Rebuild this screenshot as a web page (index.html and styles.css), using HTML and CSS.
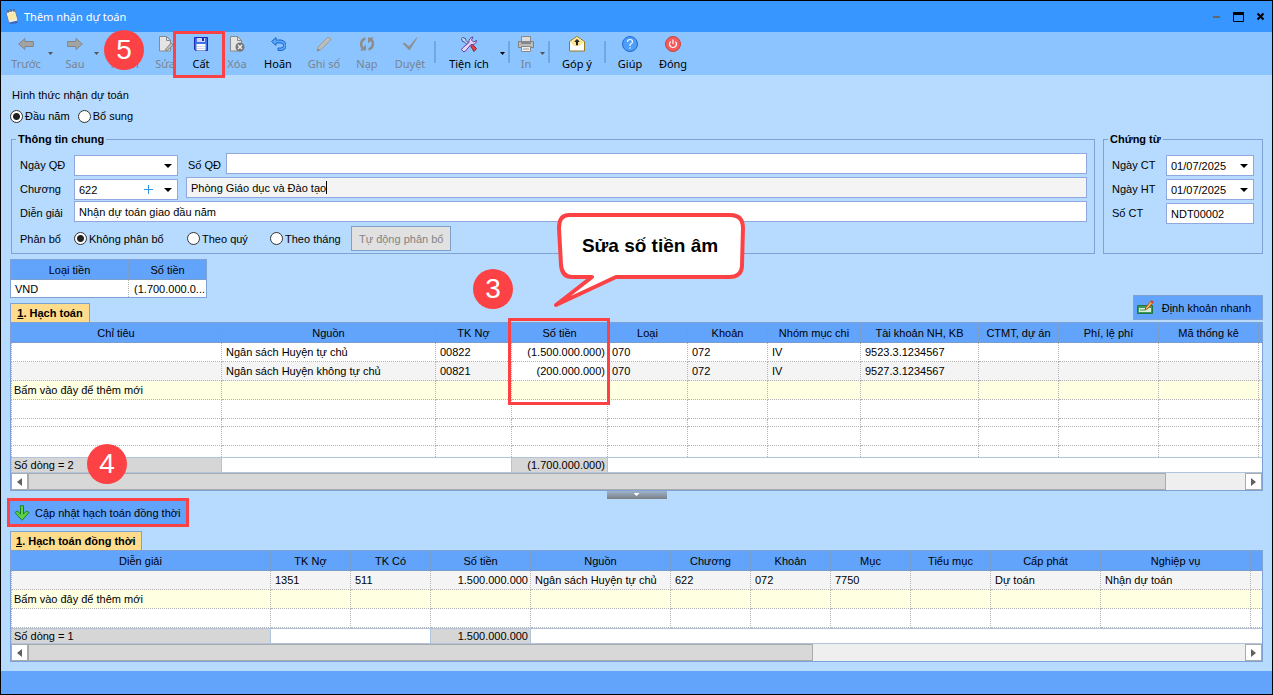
FILE: index.html
```html
<!DOCTYPE html>
<html lang="vi">
<head>
    <meta charset="UTF-8">
    <meta name="viewport" content="width=device-width, initial-scale=1.0">
    <title>Thêm nhận dự toán</title>
    <link rel="stylesheet" href="styles.css">
</head>
<body>

<div class="window">
    <header class="titlebar">
        <svg class="app-icon" width="14" height="16" viewBox="0 0 14 16">
            <path d="M1 3l9-2 3 11-9 2z" fill="#e9eefb" stroke="#5b7fc4"/>
            <path d="M2 5l8-2 2 7-8 2z" fill="#fbe9a8"/>
            <path d="M4 14l8-2 1 2-7 1z" fill="#4065b5"/>
            <path d="M3 1v3M6 0v3M9 0v3" stroke="#555"/>
        </svg>
        <h1>Thêm nhận dự toán</h1>
        <div class="window-buttons">
            <button aria-label="Thu nhỏ"><svg width="12" height="12"><path d="M2 6h7" stroke="#666" stroke-width="2"/></svg></button>
            <button aria-label="Phóng to"><svg width="12" height="12"><path d="M.5 1v9.500h10V1" fill="none" stroke="#000"/><path d="M0 2.500h11" stroke="#000" stroke-width="3"/></svg></button>
            <button aria-label="Đóng cửa sổ"><svg width="12" height="12"><path d="M2.500 2.500l6 6M8.500 2.500l-6 6" stroke="#000" stroke-width="2"/></svg></button>
        </div>
    </header>

    <nav class="toolbar">
        <button class="tool tool-lg" disabled>
            <svg width="16" height="16"><path d="M.7 8L7 2.500v3h8.300v5H7v3z" fill="#a3a3a3" stroke="#858585"/></svg>
            Trước
        </button>
        <span class="drop off"></span>
        <button class="tool tool-md" disabled>
            <svg width="16" height="16"><path d="M15.300 8L9 2.500v3H.7v5H9v3z" fill="#a3a3a3" stroke="#858585"/></svg>
            Sau
        </button>
        <span class="drop off"></span>
        <button class="tool tool-lg" disabled>
            <svg width="16" height="16"><path d="M3.500.5h6l3 3v12h-9z" fill="#ddd" stroke="#888"/></svg>
            Thêm
        </button>
        <button class="tool tool-sm" disabled>
            <svg width="16" height="16"><path d="M2.500.5h7l4 4v10.500h-11z" fill="#e4e4e4" stroke="#8a8a8a"/><path d="M9.500.5v4h4" fill="none" stroke="#8a8a8a"/><path d="M8 14l6-7 2 2-6 6z" fill="#bbb" stroke="#888"/></svg>
            Sửa
        </button>
        <button class="tool tool-sm">
            <svg width="16" height="16"><path d="M1.500 1.500h13v13h-12l-1-1z" fill="#3d6fe6" stroke="#1c2bb0"/><path d="M4 2h8v4H4z" fill="#c9d6f5"/><path d="M9 2h2v3H9z" fill="#1c2bb0"/><path d="M3.500 8h9v6.500h-9z" fill="#fff"/><path d="M4 10.500h8M4 12.500h8" stroke="#cfd9ee"/></svg>
            Cất
        </button>
        <button class="tool tool-sm" disabled>
            <svg width="16" height="16"><path d="M1.500.5h7l4 4v10.500h-11z" fill="#e4e4e4" stroke="#8a8a8a"/><path d="M8.500.5v4h4" fill="none" stroke="#8a8a8a"/><circle cx="11" cy="11" r="4.500" fill="#777"/><path d="M9 9l4 4M13 9l-4 4" stroke="#eee" stroke-width="1.500"/></svg>
            Xóa
        </button>
        <button class="tool tool-lg">
            <svg width="16" height="16"><path d="M6 1.500L1.500 5.500 6 9.500V7h5q2.500 0 2.500 2.500T10.500 12H8v2.500h3q5-.5 5-5T11 4H6z" fill="#58a6f5" stroke="#1e66cf"/></svg>
            Hoãn
        </button>
        <button class="tool tool-lg" disabled>
            <svg width="16" height="16"><path d="M1 15l1-4L12 1l3 2.500L5 13.500z" fill="#bdbdbd" stroke="#9a9a9a"/><path d="M1 15l1.500-2 1 1z" fill="#666"/></svg>
            Ghi sổ
        </button>
        <button class="tool tool-md" disabled>
            <svg width="16" height="16"><path d="M6.500 2.500C1.500 4 1 9.500 4 12.500M9.500 13.500c5-1.500 5.500-7 2.500-10" fill="none" stroke="#8d8d8d" stroke-width="2.500"/><path d="M1 14.500h6v-6zM15 1.500H9v6z" fill="#8d8d8d"/></svg>
            Nạp
        </button>
        <button class="tool tool-lg" disabled>
            <svg width="16" height="16"><path d="M.5 7.500l2-1L7 10.500 14.500 1.500h1L7.500 14.500z" fill="#8f8f8f"/></svg>
            Duyệt
        </button>
        <span class="separator"></span>
        <button class="tool tool-xl">
            <svg width="18" height="16" viewBox="0 0 17 16"><path d="M2 1.500l3 1 .5 2 4 4-1.500 1.500-4-4-2-.5-1-3z" fill="#c6dcf5" stroke="#3c4da0"/><path d="M9.500 9l1.500-1.500 5 5-2.500 3z" fill="#e0444b" stroke="#8c2634"/><path d="M2 15q-2-1.500 0-3L8.500 6.500Q8 2 12.500 1L11 4l2 2 3-1.500Q15.500 9 10.500 8.500L5 15q-1.500 1.500-3 0z" fill="#e6d6f6" stroke="#6141a0"/></svg>
            Tiện ích
        </button>
        <span class="drop"></span>
        <span class="separator"></span>
        <button class="tool tool-xs" disabled>
            <svg width="16" height="16"><path d="M3.500.5h9v5h-9z" fill="#ddd" stroke="#888"/><path d="M.5 5.500h15v6H.5z" fill="#bbb" stroke="#808080"/><path d="M3 5h10v3H3z" fill="#888"/><path d="M3.500 10.500h9v5h-9z" fill="#eee" stroke="#888"/><path d="M5 13h6" stroke="#999"/></svg>
            In
        </button>
        <span class="drop off"></span>
        <span class="separator"></span>
        <button class="tool tool-wide">
            <svg width="16" height="16"><path d="M.5 5.500L8 .5l7.500 5v9.500H.5z" fill="#fff" stroke="#9a7a1a"/><path d="M1 6l7-5 7 5-4.500 4h-5z" fill="#fce691"/><path d="M7.500 9V5h1v4zM6 5.500l2-2 2 2z" stroke="#222" fill="#222"/></svg>
            Góp ý
        </button>
        <span class="separator"></span>
        <button class="tool tool-lg">
            <svg width="16" height="16" fill="none"><circle cx="8" cy="8" r="7.500" fill="#4d9dfa" stroke="#2268cf"/><path d="M5.500 6Q5.500 3.500 8 3.500T10.500 6Q10.500 7.200 8 8.500v1.500M8 11.200v1.600" stroke="#fff" stroke-width="1.200"/></svg>
            Giúp
        </button>
        <button class="tool tool-md">
            <svg width="16" height="16" fill="none"><circle cx="8" cy="8" r="7.500" fill="#f25c5c" stroke="#cd4141"/><path d="M5.500 5.500q-2 2.500 0 5 2.500 2 5 0 2-2.500 0-5M8 3.500V8" stroke="#fff" stroke-width="1.200"/></svg>
            Đóng
        </button>
    </nav>

    <main class="content">
        <div class="kind" role="radiogroup" aria-labelledby="kindLabel">
            <p id="kindLabel">Hình thức nhận dự toán</p>
            <div class="radios">
                <label class="radio"><input type="radio" name="kind" checked>Đầu năm</label>
                <label class="radio"><input type="radio" name="kind">Bổ sung</label>
            </div>
        </div>

        <div class="groups">
            <fieldset class="group group-main">
                <legend>Thông tin chung</legend>
                <div class="row">
                    <label class="caption" for="decisionDate">Ngày QĐ</label>
                    <span class="combo combo-wide"><select id="decisionDate"><option></option></select></span>
                    <label class="caption caption-mid" for="decisionNo">Số QĐ</label>
                    <input class="field" id="decisionNo" type="text">
                </div>
                <div class="row">
                    <label class="caption" for="chapter">Chương</label>
                    <span class="combo combo-wide">
                        <select id="chapter"><option>622</option></select>
                        <button class="plus" aria-label="Thêm chương"><svg width="9" height="9"><path d="M0 4.500h9M4.500 0v9" stroke="#2e97e6"/></svg></button>
                    </span>
                    <span class="field field-readonly">
                        <input type="text" value="Phòng Giáo dục và Đào tạo" aria-label="Tên chương" readonly><i class="caret"></i>
                    </span>
                </div>
                <div class="row">
                    <label class="caption" for="description">Diễn giải</label>
                    <input class="field" id="description" type="text" value="Nhận dự toán giao đầu năm">
                </div>
                <div class="row row-split" role="radiogroup" aria-labelledby="splitLabel">
                    <span class="caption" id="splitLabel">Phân bổ</span>
                    <label class="radio radio-none"><input type="radio" name="split" checked>Không phân bổ</label>
                    <label class="radio radio-part"><input type="radio" name="split">Theo quý</label>
                    <label class="radio radio-month"><input type="radio" name="split">Theo tháng</label>
                    <button class="auto-split" disabled>Tự động phân bổ</button>
                </div>
            </fieldset>

            <fieldset class="group group-voucher">
                <legend>Chứng từ</legend>
                <div class="row">
                    <label class="caption" for="voucherDate">Ngày CT</label>
                    <span class="combo"><select id="voucherDate"><option>01/07/2025</option></select></span>
                </div>
                <div class="row">
                    <label class="caption" for="postDate">Ngày HT</label>
                    <span class="combo"><select id="postDate"><option>01/07/2025</option></select></span>
                </div>
                <div class="row">
                    <label class="caption" for="voucherNo">Số CT</label>
                    <input class="field" id="voucherNo" type="text" value="NDT00002">
                </div>
            </fieldset>
        </div>

        <div class="currency">
            <table>
                <colgroup><col class="w118"><col></colgroup>
                <thead><tr><th>Loại tiền</th><th>Số tiền</th></tr></thead>
                <tbody><tr><td>VND</td><td class="num">(1.700.000.0...</td></tr></tbody>
            </table>
        </div>

        <div class="tabs">
            <button class="tab"><u>1</u>. Hạch toán</button>
            <button class="action quick">
                <svg width="17" height="16"><path d="M.5 5.500h15v8H.5z" fill="#3a9a5e" stroke="#1f7543"/><path d="M2 8h12v4H2z" fill="#d5efd4"/><path d="M3 10h5" stroke="#3a9a5e"/><path d="M8 10l1-3 5-6 2 1.500-5 6z" fill="#f5b65a" stroke="#a85427"/><path d="M14 1l2 1.500" stroke="#d33" stroke-width="2"/></svg>
                Định khoản nhanh
            </button>
        </div>

        <div class="grid">
            <table>
                <colgroup>
                    <col class="w211"><col class="w214"><col class="w76"><col class="w96"><col class="w80"><col class="w80"><col class="w93"><col class="w118"><col class="w80"><col class="w100"><col class="w100"><col>
                </colgroup>
                <thead>
                    <tr><th>Chỉ tiêu</th><th>Nguồn</th><th>TK Nợ</th><th>Số tiền</th><th>Loại</th><th>Khoản</th><th>Nhóm mục chi</th><th>Tài khoản NH, KB</th><th>CTMT, dự án</th><th>Phí, lệ phí</th><th>Mã thống kê</th><th></th></tr>
                </thead>
                <tbody>
                    <tr><td></td><td>Ngân sách Huyện tự chủ</td><td>00822</td><td class="num">(1.500.000.000)</td><td>070</td><td>072</td><td>IV</td><td>9523.3.1234567</td><td></td><td></td><td></td><td></td></tr>
                    <tr class="alt"><td></td><td>Ngân sách Huyện không tự chủ</td><td>00821</td><td class="num edited">(200.000.000)</td><td>070</td><td>072</td><td>IV</td><td>9527.3.1234567</td><td></td><td></td><td></td><td></td></tr>
                    <tr class="new"><td>Bấm vào đây để thêm mới</td><td></td><td></td><td></td><td></td><td></td><td></td><td></td><td></td><td></td><td></td><td></td></tr>
                    <tr><td></td><td></td><td></td><td></td><td></td><td></td><td></td><td></td><td></td><td></td><td></td><td></td></tr>
                    <tr class="thin"><td></td><td></td><td></td><td></td><td></td><td></td><td></td><td></td><td></td><td></td><td></td><td></td></tr>
                    <tr><td></td><td></td><td></td><td></td><td></td><td></td><td></td><td></td><td></td><td></td><td></td><td></td></tr>
                    <tr class="cut"><td></td><td></td><td></td><td></td><td></td><td></td><td></td><td></td><td></td><td></td><td></td><td></td></tr>
                </tbody>
                <tfoot>
                    <tr><td class="sum">Số dòng = 2</td><td colspan="2" class="before-sum"></td><td class="sum num">(1.700.000.000)</td><td colspan="8"></td></tr>
                </tfoot>
            </table>
            <div class="scrollbar">
                <button aria-label="Cuộn trái"><svg width="5" height="8"><path d="M5 0v8L0 4z"/></svg></button>
                <div class="track"><div class="thumb thumb-long"></div></div>
                <button aria-label="Cuộn phải"><svg width="5" height="8"><path d="M0 0v8l5-4z"/></svg></button>
            </div>
        </div>

        <div class="splitter"><button aria-label="Thu gọn"></button></div>

        <button class="action update">
            <svg width="16" height="16"><path d="M6.500.7h3v8.500l3-3.200 2.500 1.500-7 7.800L1 7.500 3.500 6l3 3.200z" fill="#5fd047" stroke="#17861d"/></svg>
            Cập nhật hạch toán đồng thời
        </button>

        <div class="tabs tabs-second">
            <button class="tab"><u>1</u>. Hạch toán đồng thời</button>
        </div>

        <div class="grid">
            <table>
                <colgroup>
                    <col class="w260"><col class="w80"><col class="w80"><col class="w100"><col class="w140"><col class="w80"><col class="w80"><col class="w80"><col class="w80"><col class="w110"><col class="w150"><col>
                </colgroup>
                <thead>
                    <tr><th>Diễn giải</th><th>TK Nợ</th><th>TK Có</th><th>Số tiền</th><th>Nguồn</th><th>Chương</th><th>Khoản</th><th>Mục</th><th>Tiểu mục</th><th>Cấp phát</th><th>Nghiệp vụ</th><th></th></tr>
                </thead>
                <tbody>
                    <tr class="alt"><td></td><td>1351</td><td>511</td><td class="num">1.500.000.000</td><td>Ngân sách Huyện tự chủ</td><td>622</td><td>072</td><td>7750</td><td></td><td>Dự toán</td><td>Nhận dự toán</td><td></td></tr>
                    <tr class="new"><td>Bấm vào đây để thêm mới</td><td></td><td></td><td></td><td></td><td></td><td></td><td></td><td></td><td></td><td></td><td></td></tr>
                    <tr><td></td><td></td><td></td><td></td><td></td><td></td><td></td><td></td><td></td><td></td><td></td><td></td></tr>
                </tbody>
                <tfoot>
                    <tr><td class="sum">Số dòng = 1</td><td colspan="2" class="before-sum"></td><td class="sum num">1.500.000.000</td><td colspan="8"></td></tr>
                </tfoot>
            </table>
            <div class="scrollbar">
                <button aria-label="Cuộn trái"><svg width="5" height="8"><path d="M5 0v8L0 4z"/></svg></button>
                <div class="track"><div class="thumb thumb-short"></div></div>
                <button aria-label="Cuộn phải"><svg width="5" height="8"><path d="M0 0v8l5-4z"/></svg></button>
            </div>
        </div>
    </main>

    <footer class="statusbar"></footer>

    <!-- Guide marks over the form -->
    <div class="mark mark-save"></div>
    <div class="mark mark-amount"></div>
    <div class="mark mark-update"></div>
    <span class="step step-3">3</span>
    <span class="step step-4">4</span>
    <span class="step step-5">5</span>
    <div class="callout">
        <svg width="196" height="98"><path d="M17 4L178 4Q191 4 191 17L190 54Q190 66 177 66L64 66 4 94 40 66 20 66Q10 66 9 54L7 17Q7 4 17 4z" fill="#fff" stroke="#fd4245" stroke-width="4" stroke-linejoin="round"/></svg>
        <p>Sửa số tiền âm</p>
    </div>
</div>

</body>
</html>
```
FILE: styles.css
```css
* {
    box-sizing: border-box;
}
body {
    margin: 0;
    background: #b6dbff;
    color: #000;
    font: 11px/14px "Liberation Sans", Arial, sans-serif;
}
button, input, select {
    font: inherit;
    color: inherit;
    margin: 0;
    padding: 0;
    border: 0;
    border-radius: 0;
    outline: 0;
}
button {
    background: none;
}
h1, p {
    margin: 0;
}
svg {
    display: block;
    flex: none;
}
.window {
    position: relative;
    display: flex;
    flex-direction: column;
    min-height: 100vh;
    border: 1px solid #000;
    background: #b6dbff;
}

/* Title bar and toolbar */
.titlebar {
    display: flex;
    align-items: center;
    gap: 5px;
    height: 31px;
    padding: 0 5px 0 4px;
    background: #3796ff;
}
.titlebar h1 {
    flex: 1;
    color: #fff;
    font: 11px/16px "Noto Sans", sans-serif;
}
.window-buttons {
    display: flex;
    gap: 10px;
}
.toolbar {
    display: flex;
    height: 43px;
    padding-left: 2px;
    background: #8bc4ff;
}
.tool {
    display: flex;
    flex-direction: column;
    align-items: center;
    gap: 4px;
    padding-top: 4px;
    font: 11px/16px "Noto Sans", sans-serif;
    white-space: nowrap;
}
.tool:disabled {
    color: #7a838e;
}
.tool-xs { width: 30px; }
.tool-sm { width: 36px; }
.tool-md { width: 40px; }
.tool-lg { width: 46px; }
.tool-wide { width: 52px; }
.tool-xl { width: 64px; }
.drop {
    width: 5px;
    height: 3px;
    margin: 20px 2px 0 -1px;
    background: #000;
    clip-path: polygon(0 0, 100% 0, 50% 100%);
}
.drop.off {
    background: #555;
}
.separator {
    width: 2px;
    height: 22px;
    margin: 9px 1px 0;
    background: #70a8e6;
}

/* Form */
.content {
    flex: 1;
    padding: 12px 9px 9px;
}
.kind p {
    padding-left: 2px;
    line-height: 16px;
}
.radios {
    display: flex;
    gap: 8px;
    margin-top: 6px;
}
.radio {
    display: flex;
    align-items: center;
    gap: 2px;
    white-space: nowrap;
}
.radio input {
    appearance: none;
    width: 13px;
    height: 13px;
    border: 1px solid #333;
    border-radius: 50%;
    background: #fff;
}
.radio input:checked {
    background: radial-gradient(circle, #222 3px, #fff 4px);
}
.groups {
    display: flex;
    gap: 8px;
    margin-top: 9px;
}
.group {
    min-width: 0;
    margin: 0;
    padding: 7px 8px 0;
    border: 1px solid #7ea2d6;
}
.group legend {
    margin-left: -4px;
    padding: 0 2px;
    font-weight: bold;
    line-height: 14px;
}
.group-main {
    flex: 1;
    margin-left: 1px;
    padding-right: 7px;
    padding-bottom: 2px;
}
.group-voucher {
    width: 160px;
}
.row {
    display: flex;
    height: 23px;
    margin-bottom: 1px;
}
.caption {
    width: 54px;
    flex: none;
    line-height: 23px;
    padding-top: 1px;
    white-space: nowrap;
}
.caption-mid {
    width: 38px;
    margin-left: 10px;
}
.field {
    flex: 1;
    min-width: 0;
    height: 21px;
    padding: 0 4px;
    border: 1px solid #90a7e0;
    background: #fff;
}
.field-readonly {
    display: flex;
    align-items: center;
    margin-left: 8px;
    background: #f4f4f4;
}
.field-readonly input {
    field-sizing: content;
    background: none;
}
.caret {
    width: 1px;
    height: 13px;
    background: #000;
}
.combo {
    position: relative;
    flex: 1;
    height: 21px;
    margin-top: 2px;
    border: 1px solid #90a7e0;
    background: #fff;
}
.combo-wide {
    flex: none;
    width: 104px;
}
.combo select {
    appearance: none;
    display: block;
    width: 100%;
    height: 19px;
    padding-left: 4px;
    background: none;
}
.combo::after {
    content: "";
    position: absolute;
    top: 8px;
    right: 5px;
    width: 8px;
    height: 4px;
    background: #000;
    clip-path: polygon(0 0, 100% 0, 50% 100%);
}
.plus {
    position: absolute;
    top: 5px;
    right: 24px;
}
.group-voucher .field {
    margin-top: 2px;
}
.row-split {
    align-items: center;
    height: 25px;
    margin-top: 2px;
    margin-bottom: 0;
}
.radio-none { width: 113px; }
.radio-part { width: 83px; }
.radio-month { width: 81px; }
.auto-split {
    height: 25px;
    padding: 0 7px;
    border: 1px solid #7e9fc8;
    background: #e1e1e1;
    color: #838383;
    white-space: nowrap;
}

/* Tables */
table {
    width: 100%;
    border-spacing: 0;
    table-layout: fixed;
}
.w76 { width: 76px; }
.w80 { width: 80px; }
.w93 { width: 93px; }
.w96 { width: 96px; }
.w100 { width: 100px; }
.w110 { width: 110px; }
.w118 { width: 118px; }
.w140 { width: 140px; }
.w150 { width: 150px; }
.w211 { width: 211px; }
.w214 { width: 214px; }
.w260 { width: 260px; }
th {
    height: 20px;
    padding: 0;
    border-right: 1px solid #7c9cc9;
    border-bottom: 1px solid #7c9cc9;
    background: #62a3fb;
    font-weight: normal;
    white-space: nowrap;
}
td {
    height: 19px;
    padding: 0 2px 0 4px;
    border-right: 1px dotted #b4b4b4;
    border-bottom: 1px dotted #b4b4b4;
    background: #fff;
    line-height: 14px;
    white-space: nowrap;
}
th:last-child, td:last-child {
    border-right: 0;
}
.grid td:first-child {
    padding-left: 2px;
    border-left: 1px dotted #b4b4b4;
}
.num {
    text-align: right;
}
.alt td {
    background: #f4f4f4;
}
.alt .edited {
    background: #fff;
}
.new td {
    background: #ffffe1;
}
.thin td {
    height: 8px;
}
.cut td {
    height: 11px;
    border-bottom: 0;
}
tfoot td {
    height: 16px;
    border-top: 1px solid #b0c4de;
    border-bottom: 1px solid #b0c4de;
    border-right: 0;
}
tfoot .sum {
    border-right: 1px solid #b0c4de;
    background: #d6d6d6;
}
tfoot .before-sum {
    border-right: 1px solid #b0c4de;
}
.currency {
    width: 197px;
    margin-top: 5px;
    border: 1px solid #7ea2d6;
}
.currency td {
    height: 17px;
    border-bottom: 0;
}
.currency .num {
    padding-right: 1px;
}
.tabs {
    display: flex;
    align-items: flex-end;
    justify-content: space-between;
    height: 24px;
}
.tab {
    min-width: 80px;
    height: 19px;
    padding: 0 5px;
    border: 1px solid #7ea2d6;
    border-bottom: 0;
    background: #ffdc8b;
    font-weight: bold;
}
.action {
    display: flex;
    align-items: center;
    background: #62a3fb;
    white-space: nowrap;
}
.quick {
    align-self: flex-start;
    gap: 8px;
    height: 25px;
    margin-top: -3px;
    padding: 0 11px 0 3px;
    border: 1px solid #7ea2d6;
}
.grid {
    border: 1px solid #7ea2d6;
}
.scrollbar {
    display: flex;
    height: 17px;
    background: #efefef;
}
.scrollbar button {
    display: grid;
    place-items: center;
    width: 17px;
    border: 1px solid #aaa;
    background: #fff;
    fill: #606060;
}
.track {
    flex: 1;
}
.thumb {
    height: 17px;
    border: 1px solid #aaa;
    background: #d8d8d8;
}
.thumb-long { width: 93.5%; }
.thumb-short { width: 64.5%; }
.splitter {
    display: flex;
    justify-content: center;
}
.splitter button {
    display: flex;
    justify-content: center;
    width: 60px;
    height: 8px;
    padding-top: 2px;
    background: linear-gradient(#9db3cd, #7c7f84);
}
.splitter button::after {
    content: "";
    width: 6px;
    height: 3px;
    background: #fff;
    clip-path: polygon(0 0, 100% 0, 50% 100%);
}
.update {
    gap: 5px;
    height: 23px;
    margin-top: 2px;
    padding: 0 8px 0 4px;
}
.tabs-second {
    height: 26px;
}
.statusbar {
    height: 23px;
    background: #62a3fb;
}

/* Guide marks */
.mark, .step, .callout {
    position: absolute;
    pointer-events: none;
}
.mark {
    border: 3px solid #fd4245;
}
.mark-save {
    left: 172px;
    top: 30px;
    width: 52px;
    height: 47px;
}
.mark-amount {
    left: 507px;
    top: 317px;
    width: 102px;
    height: 87px;
}
.mark-update {
    left: 6px;
    top: 497px;
    width: 182px;
    height: 29px;
}
.step {
    width: 40px;
    height: 40px;
    border-radius: 50%;
    background: #fd4245;
    color: #fff;
    font-size: 28px;
    line-height: 40px;
    text-align: center;
}
.step-3 { left: 472px; top: 268px; }
.step-4 { left: 86px; top: 443px; }
.step-5 { left: 103px; top: 29px; }
.callout {
    left: 551px;
    top: 210px;
}
.callout p {
    position: absolute;
    top: 24px;
    left: 0;
    width: 196px;
    font-size: 19px;
    font-weight: bold;
    line-height: 22px;
    text-align: center;
}
```
